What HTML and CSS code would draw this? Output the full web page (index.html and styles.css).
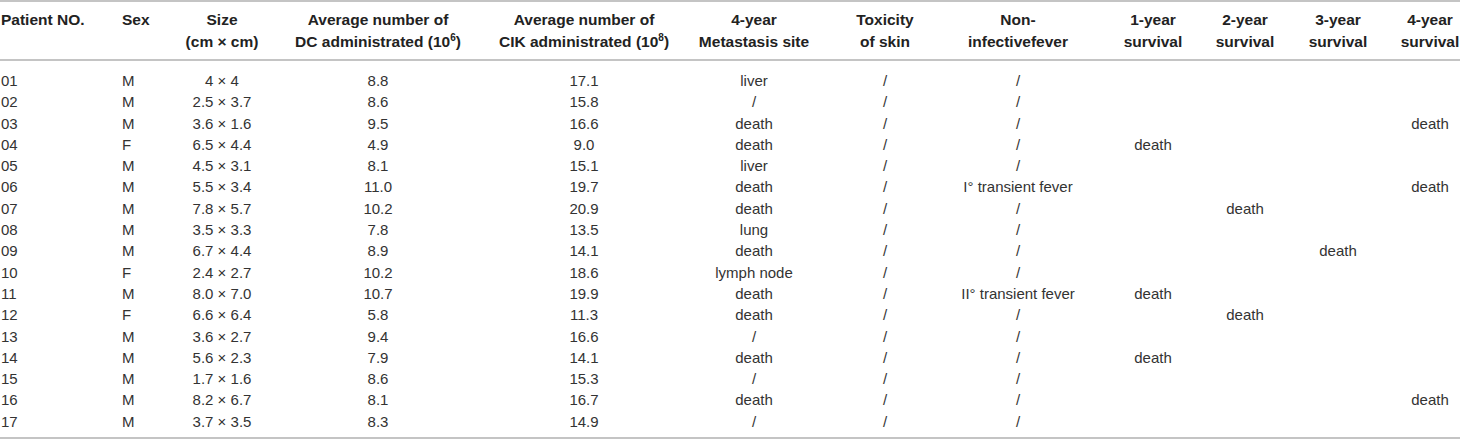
FILE: index.html
```html
<!DOCTYPE html>
<html lang="en">
<head>
<meta charset="utf-8">
<title>Patient table</title>
<link rel="stylesheet" href="styles.css">
</head>
<body>
<table class="data">
  <colgroup>
    <col class="c-id"><col class="c-sex"><col class="c-size"><col class="c-dc"><col class="c-cik"><col class="c-meta"><col class="c-tox"><col class="c-fever"><col class="c-y1"><col class="c-y2"><col class="c-y3"><col class="c-y4">
  </colgroup>
  <thead>
    <tr>
      <th class="left">Patient NO.</th>
      <th class="left">Sex</th>
      <th>Size<br>(cm × cm)</th>
      <th>Average number of<br>DC administrated (10<sup>6</sup>)</th>
      <th>Average number of<br>CIK administrated (10<sup>8</sup>)</th>
      <th>4-year<br>Metastasis site</th>
      <th>Toxicity<br>of skin</th>
      <th>Non-<br>infectivefever</th>
      <th>1-year<br>survival</th>
      <th>2-year<br>survival</th>
      <th>3-year<br>survival</th>
      <th>4-year<br>survival</th>
    </tr>
  </thead>
  <tbody>
    <tr><td class="left">01</td><td class="left">M</td><td>4 × 4</td><td>8.8</td><td>17.1</td><td>liver</td><td>/</td><td>/</td><td></td><td></td><td></td><td></td></tr>
    <tr><td class="left">02</td><td class="left">M</td><td>2.5 × 3.7</td><td>8.6</td><td>15.8</td><td>/</td><td>/</td><td>/</td><td></td><td></td><td></td><td></td></tr>
    <tr><td class="left">03</td><td class="left">M</td><td>3.6 × 1.6</td><td>9.5</td><td>16.6</td><td>death</td><td>/</td><td>/</td><td></td><td></td><td></td><td>death</td></tr>
    <tr><td class="left">04</td><td class="left">F</td><td>6.5 × 4.4</td><td>4.9</td><td>9.0</td><td>death</td><td>/</td><td>/</td><td>death</td><td></td><td></td><td></td></tr>
    <tr><td class="left">05</td><td class="left">M</td><td>4.5 × 3.1</td><td>8.1</td><td>15.1</td><td>liver</td><td>/</td><td>/</td><td></td><td></td><td></td><td></td></tr>
    <tr><td class="left">06</td><td class="left">M</td><td>5.5 × 3.4</td><td>11.0</td><td>19.7</td><td>death</td><td>/</td><td>I° transient fever</td><td></td><td></td><td></td><td>death</td></tr>
    <tr><td class="left">07</td><td class="left">M</td><td>7.8 × 5.7</td><td>10.2</td><td>20.9</td><td>death</td><td>/</td><td>/</td><td></td><td>death</td><td></td><td></td></tr>
    <tr><td class="left">08</td><td class="left">M</td><td>3.5 × 3.3</td><td>7.8</td><td>13.5</td><td>lung</td><td>/</td><td>/</td><td></td><td></td><td></td><td></td></tr>
    <tr><td class="left">09</td><td class="left">M</td><td>6.7 × 4.4</td><td>8.9</td><td>14.1</td><td>death</td><td>/</td><td>/</td><td></td><td></td><td>death</td><td></td></tr>
    <tr><td class="left">10</td><td class="left">F</td><td>2.4 × 2.7</td><td>10.2</td><td>18.6</td><td>lymph node</td><td>/</td><td>/</td><td></td><td></td><td></td><td></td></tr>
    <tr><td class="left">11</td><td class="left">M</td><td>8.0 × 7.0</td><td>10.7</td><td>19.9</td><td>death</td><td>/</td><td>II° transient fever</td><td>death</td><td></td><td></td><td></td></tr>
    <tr><td class="left">12</td><td class="left">F</td><td>6.6 × 6.4</td><td>5.8</td><td>11.3</td><td>death</td><td>/</td><td>/</td><td></td><td>death</td><td></td><td></td></tr>
    <tr><td class="left">13</td><td class="left">M</td><td>3.6 × 2.7</td><td>9.4</td><td>16.6</td><td>/</td><td>/</td><td>/</td><td></td><td></td><td></td><td></td></tr>
    <tr><td class="left">14</td><td class="left">M</td><td>5.6 × 2.3</td><td>7.9</td><td>14.1</td><td>death</td><td>/</td><td>/</td><td>death</td><td></td><td></td><td></td></tr>
    <tr><td class="left">15</td><td class="left">M</td><td>1.7 × 1.6</td><td>8.6</td><td>15.3</td><td>/</td><td>/</td><td>/</td><td></td><td></td><td></td><td></td></tr>
    <tr><td class="left">16</td><td class="left">M</td><td>8.2 × 6.7</td><td>8.1</td><td>16.7</td><td>death</td><td>/</td><td>/</td><td></td><td></td><td></td><td>death</td></tr>
    <tr><td class="left">17</td><td class="left">M</td><td>3.7 × 3.5</td><td>8.3</td><td>14.9</td><td>/</td><td>/</td><td>/</td><td></td><td></td><td></td><td></td></tr>
  </tbody>
</table>
</body>
</html>
```

FILE: styles.css
```css
html, body {
  margin: 0;
  padding: 0;
  background: #fff;
}

.data {
  width: 1460px;
  table-layout: fixed;
  border-collapse: collapse;
  font-family: "Liberation Sans", Arial, sans-serif;
  font-size: 15px;
  color: #333;
  border-top: 2px solid #c4c4c4;
  border-bottom: 2px solid #c4c4c4;
}

.c-id { width: 121px; }
.c-sex { width: 53px; }
.c-size { width: 96px; }
.c-dc { width: 216px; }
.c-cik { width: 196px; }
.c-meta { width: 144px; }
.c-tox { width: 118px; }
.c-fever { width: 148px; }
.c-y1 { width: 122px; }
.c-y2 { width: 62px; }
.c-y3 { width: 124px; }
.c-y4 { width: 60px; }

.data th,
.data td {
  padding: 0;
  text-align: center;
  white-space: nowrap;
}

.data th {
  font-weight: bold;
  font-size: 15.5px;
  color: #222;
  line-height: 22px;
  padding-top: 7px;
  padding-bottom: 6px;
  vertical-align: top;
}

.data thead tr {
  border-bottom: 2px solid #c4c4c4;
}

.data td {
  line-height: 21.3px;
  height: 21.3px;
}

.data tbody tr:first-child td {
  padding-top: 9px;
}

.data tbody tr:last-child td {
  padding-bottom: 5px;
}

.data .left {
  text-align: left;
  padding-left: 1px;
}

.data sup {
  font-size: 10px;
  line-height: 0;
  vertical-align: 6px;
}
```
